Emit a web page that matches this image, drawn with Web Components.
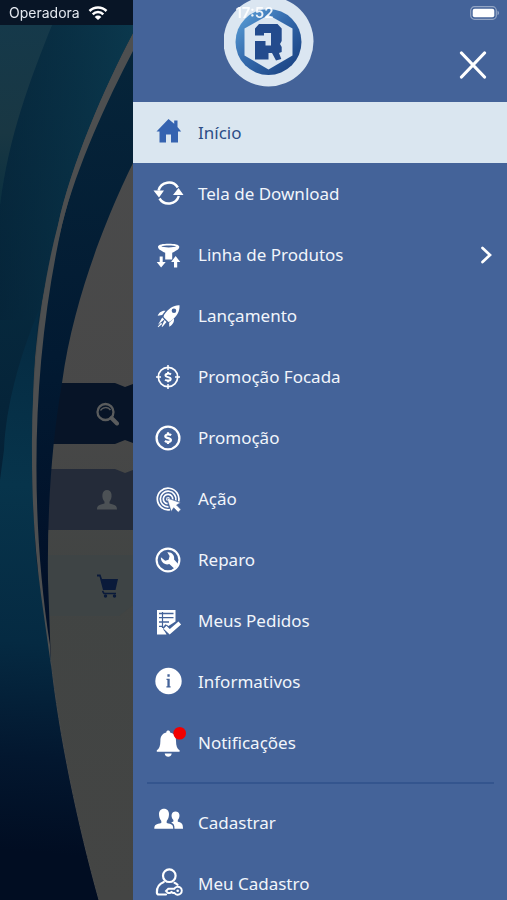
<!DOCTYPE html>
<html lang="pt-BR">
<head>
<meta charset="utf-8">
<meta name="viewport" content="width=device-width, initial-scale=1">
<title>Menu</title>
<style>
  html, body { margin: 0; height: 100%; }
  body { font-family: "Noto Sans", "Open Sans", sans-serif; background: #454746; overflow: hidden; }
</style>
</head>
<body>
<app-shell>
  <status-bar slot="status" carrier="Operadora" time="17:52"></status-bar>
  <home-screen slot="home"></home-screen>
  <side-drawer slot="drawer">
    <drawer-header slot="header"></drawer-header>
    <menu-item icon="home" active>Início</menu-item>
    <menu-item icon="sync">Tela de Download</menu-item>
    <menu-item icon="funnel" expandable>Linha de Produtos</menu-item>
    <menu-item icon="rocket">Lançamento</menu-item>
    <menu-item icon="target">Promoção Focada</menu-item>
    <menu-item icon="coin">Promoção</menu-item>
    <menu-item icon="click">Ação</menu-item>
    <menu-item icon="wrench">Reparo</menu-item>
    <menu-item icon="orders">Meus Pedidos</menu-item>
    <menu-item icon="info">Informativos</menu-item>
    <menu-item icon="bell">Notificações</menu-item>
    <menu-divider></menu-divider>
    <menu-item icon="people">Cadastrar</menu-item>
    <menu-item icon="account">Meu Cadastro</menu-item>
  </side-drawer>
</app-shell>

<script>
const ICONS = {
  home: `<path fill="currentColor" d="M15.500 2 3.500 14.500h3V25.500h6.500v-8h5v8h7V14.500h3.200L24.500 10V3.500h-3.300v3.200z"/>`,
  sync: `<g fill="none" stroke="currentColor" stroke-width="2.500"><path d="M5.500 12.500A10.700 10.700 0 0 1 24.800 9.500"/><path d="M25.800 18A10.700 10.700 0 0 1 6.500 20.500"/></g>
    <path fill="currentColor" d="M.5 12.500h10.500l-5 7zM20 17h10.500L25.500 10z"/>`,
  funnel: `<path fill="currentColor" fill-rule="evenodd" d="M5 7.800C5 5.500 10 4.700 15.700 4.700s10.600.8 10.600 3.100c0 2-2 3.700-7.100 6v6.700h-7v-6.700C7 11.500 5 9.800 5 7.800zm3.300-.2c1.500 1.100 13.300 1.100 14.800 0-2-1.400-12.800-1.400-14.800 0z"/>
    <path fill="currentColor" d="M6.700 17.500h3v5.500h3L8.100 28.500l-4.400-5.500h3zM21 28.500h3.200V23h3.100l-4.700-6-4.500 6H21z"/>`,
  rocket: `<path fill="currentColor" fill-rule="evenodd" d="M26.500 5.200c.4 5.800-2.300 11.300-9.500 16.300l-1.500.4-5-5 .5-1.800C15.500 8.300 20.500 4.900 26.500 5.200zM20.900 8.500a2.300 2.300 0 1 0 .1 4.600 2.300 2.300 0 0 0-.1-4.600z"/>
    <path fill="currentColor" d="M12.500 10.700 9.200 15l-4.500.8c1-3 3.500-5.400 7.800-5.100zM21 18.500c.5 3.700-1.500 6.500-4.700 8.200l-.2-4zM9.200 17.500l2 2-6.200 5.300zM11.500 20l2 2-3.900 4.700-1-.2zM8 22.700l1.200 1.200-4 3.300-.5-.5z"/>`,
  target: `<circle cx="15" cy="16" r="9.700" fill="none" stroke="currentColor" stroke-width="1.700"/><path stroke="currentColor" stroke-width="1.500" d="M15 4v5M15 23v5M3 16h5M22 16h5"/>
    <path fill="none" stroke="currentColor" stroke-width="2" d="M18 13.300c-1.600-1-5.500-1.100-5.500 1 0 2.400 5.200 1.200 5.200 3.600 0 2.200-4 2-5.600.8M15 10.800v2M15 19.300v2"/>`,
  coin: `<circle cx="15" cy="16" r="11.400" fill="none" stroke="currentColor" stroke-width="2.300"/>
    <path fill="none" stroke="currentColor" stroke-width="2.200" d="M18.200 13.200c-1.700-1.100-5.900-1.200-5.900 1.100 0 2.400 5.600 1.200 5.600 3.700 0 2.400-4.300 2.200-6 .9M15 10.300v2.200M15 19.700v2.200"/>`,
  click: `<g fill="none" stroke="currentColor" stroke-width="1.700"><path d="M25.600 18.500A10.800 10.800 0 1 0 17 26.600"/><path d="M22.800 17.500A7.800 7.800 0 1 0 15.500 23.800"/><path d="M19.700 16.500A4.700 4.700 0 1 0 14.600 20.700"/></g>
    <circle cx="15" cy="16" r="2" fill="currentColor"/><path fill="currentColor" stroke="#446399" stroke-width=".5" d="M14 15l13.500 4.700-4 2.300 4.400 4.600-2.700 2.600-4.500-4.500-2.500 3.800z"/>`,
  wrench: `<circle cx="15" cy="16" r="11.400" fill="none" stroke="currentColor" stroke-width="2.100"/>
    <path fill="currentColor" d="M14.300 8.300c4.300-.6 7.700 3 6.800 7.200l4.300 4.700-4.200 4.200-4.900-4.300c-4.400 1.300-8.800-1.900-8.400-6.800l4.300 3.400 3.400-1 1-3.700z"/>`,
  orders: `<path fill="currentColor" d="M4 5h18.500v11.500L15.500 21l-3-1.800-2.800 3.300 3.800 7H4z"/><path stroke="#446399" stroke-width="1.300" d="M6 8.500h14.500M6 12.700h14.500M6 17h10M6 21.300h4"/><path stroke="#446399" stroke-width="1.200" d="M9.500 7v16"/>
    <path fill="none" stroke="#446399" stroke-width="6" d="m12.300 22.700 4.400 4.200L27 18"/><path fill="none" stroke="currentColor" stroke-width="4" d="m12 22.300 4.700 4.400L26.800 18"/>`,
  info: `<circle cx="15.500" cy="15" r="13.200" fill="currentColor"/><path fill="#446399" d="M14.400 8.300h2.300v2.400h-2.300zM13.500 12.800h3.200v7.400h.9v1.200h-4.200v-1.200h1V14h-.9z"/>`,
  bell: `<path fill="currentColor" d="M13.300 5.500c0-2.600 3.800-2.600 3.800 0 4.100.9 5.900 4.200 5.900 8.200 0 5.200 1.200 8.200 3.600 9.500v1.500H3.800v-1.500c2.400-1.300 3.600-4.300 3.600-9.500 0-4 1.800-7.300 5.900-8.200zM11.700 26.500h7c-.5 4.300-6.500 4.300-7 0z"/><circle cx="26.700" cy="6.200" r="6.300" fill="#f20000"/>`,
  people: `<path fill="currentColor" d="M1.300 21.700c0-4.200 2-4.500 7-5.700v-2C6.800 12.300 6 10 6 7c0-7 10-7 10 0 0 3-.8 5.300-2.300 7v2c5 1.200 6.500 1.500 6.500 5.700z"/>
    <path fill="currentColor" d="M21.500 21.700c0-3.600-.8-5.200-3.300-6.200l2.200-.9v-1.500c-3.200-3.600-2-8.600 2.100-8.600 4.300 0 5.300 4.900 2.300 8.600v1.700c4 .9 5.200 1.900 5.200 6.900z"/>`,
  account: `<g fill="none" stroke="currentColor" stroke-width="2.200" stroke-linecap="round"><circle cx="16.300" cy="7.700" r="6.300"/><path d="M10.800 14C6.200 15.800 3.700 20 3.900 24.500c0 1 .8 2 2 2H13M21.500 14.800c1.200.5 2.200 1.200 3 2"/>
    <path d="M21.300 20.800h-6l-2.300 2.200 2 2h2l1.500-1 1.500 1h1.500a4 4 0 1 0-.2-4.200z" stroke-width="1.900"/></g><circle cx="24.700" cy="22.800" r="1.300" fill="currentColor"/>`
};

class BaseElement extends HTMLElement {
  connectedCallback() {
    if (this.shadowRoot) return;
    const tpl = document.createElement("template");
    tpl.innerHTML = this.render();
    this.attachShadow({ mode: "open" }).append(tpl.content.cloneNode(true));
  }
}

customElements.define("app-shell", class extends BaseElement {
  render() {
    return `<style>
      :host { display: grid; grid-template-columns: 133px minmax(0, 1fr); grid-template-rows: 100vh; position: relative; overflow: hidden; }
      .status { position: absolute; inset: 0 0 auto 0; z-index: 2; pointer-events: none; }
    </style>
    <slot name="home"></slot><slot name="drawer"></slot>
    <div class="status"><slot name="status"></slot></div>`;
  }
});

customElements.define("status-bar", class extends BaseElement {
  render() {
    return `<style>
      :host { display: grid; grid-template-columns: 1fr auto 1fr; align-items: center; height: 26px; padding: 0 7px 0 9px;
        color: #fff; font: 14px/26px Inter, "Liberation Sans", sans-serif; }
      .left { display: flex; align-items: center; gap: 8px; color: #e3e8ef; }
      .time { font-size: 15px; font-weight: 600; opacity: .9; }
      .battery { justify-self: end; }
      svg { display: block; }
    </style>
    <div class="left"><span>${this.getAttribute("carrier")}</span>
      <svg width="20" height="16" viewBox="0 0 20 16" fill="none" stroke="#fff" stroke-width="2.500" aria-hidden="true"><path d="M1.500 6a12 12 0 0 1 17 0M4.700 9.300a7.500 7.500 0 0 1 10.600 0"/><path d="M10 15 6.700 11.900a4.700 4.700 0 0 1 6.600 0z" fill="#fff" stroke="none"/></svg>
    </div>
    <span class="time">${this.getAttribute("time")}</span>
    <svg class="battery" width="30" height="14" viewBox="0 0 30 14" aria-hidden="true"><rect x=".7" y=".7" width="25.600" height="12.600" rx="3.800" fill="none" stroke="#93a5c4" stroke-width="1.200"/><rect x="2.700" y="2.700" width="21.600" height="8.600" rx="2" fill="#fff"/><path d="M27.500 4.800c2 .7 2 3.700 0 4.400z" fill="#93a5c4"/></svg>`;
  }
});

customElements.define("home-screen", class extends BaseElement {
  render() {
    return `<style>
      :host { display: block; position: relative; overflow: hidden; background: linear-gradient(#4b4c4d, #484848 45%, #414443 65%, #444544); }
      .art { position: absolute; inset: 0; width: 100%; height: 100%; pointer-events: none; }
      nav { display: flex; flex-direction: column; gap: 25px; padding: 383px 0 0 45px; }
      button { display: flex; align-items: center; justify-content: flex-end; height: 61px; padding: 0 14px 0 0; border: 0; color: #5a5c5d; }
      .search { background: #071427; }
      .user { background: #242b39; color: #4c5155; }
      .cart { background: #3e4445; color: #0a1a3a; }
      .search { clip-path: polygon(0 0, 70px 0, 80px 4px, 88px 1px, 88px 60px, 80px 57px, 70px 61px, 0 61px); }
      .user { clip-path: polygon(0 0, 70px 0, 80px 4px, 88px 1px, 88px 61px, 0 61px); }
      .cart { clip-path: polygon(0 0, 100% 0, 100% 50px, 74px 61px, 0 61px); }
    </style>
    <nav aria-label="Atalhos">
      <button class="search" aria-label="Pesquisar"><svg width="24" height="24" viewBox="0 0 24 24" fill="none" stroke="currentColor"><circle cx="10.500" cy="10" r="8" stroke-width="2.300"/><path d="M5.500 8.500c2-3.500 7.500-4 10-.5" stroke-width="1.500"/><path d="m16.500 16 5.500 5.500" stroke-width="4" stroke-linecap="round"/></svg></button>
      <button class="user" aria-label="Perfil"><svg width="24" height="24" viewBox="0 0 24 24" fill="currentColor"><path d="M2 21.500c0-4 2-4.500 7.500-6v-1.700C6 9.500 6.800 2 12 2s6 7.500 2.500 11.800v1.700c5.500 1.500 7.500 2 7.500 6z"/></svg></button>
      <button class="cart" aria-label="Carrinho"><svg width="24" height="24" viewBox="0 0 24 24" fill="currentColor"><path d="M2 .5h3.500L7 5h16l-2.500 11H8L4.500 2.500H2z"/><path d="M7.500 17 9 19.500h12" fill="none" stroke="currentColor" stroke-width="1.500"/><circle cx="10.500" cy="22" r="1.700"/><circle cx="19.500" cy="22" r="1.700"/></svg></button>
    </nav>
    <svg class="art" viewBox="0 0 133 900" preserveAspectRatio="none" aria-hidden="true">
      <defs>
        <linearGradient id="body" x1="0" y1="0" x2="0" y2="1"><stop offset="0" stop-color="#0b3448"/><stop offset=".25" stop-color="#072c40"/><stop offset=".45" stop-color="#052439"/><stop offset="1" stop-color="#020d23"/></linearGradient>
        <linearGradient id="shine" x1="0" y1="0" x2="1" y2="0"><stop offset="0" stop-color="#052338" stop-opacity=".6"/><stop offset="1" stop-color="#0b394e" stop-opacity=".8"/></linearGradient>
        <linearGradient id="band" x1="0" y1="0" x2="0" y2="1"><stop offset="0" stop-color="#06253a"/><stop offset=".5" stop-color="#021a32"/><stop offset="1" stop-color="#010d25"/></linearGradient>
        <linearGradient id="low" gradientUnits="userSpaceOnUse" x1="45" y1="330" x2="5" y2="850"><stop offset="0" stop-color="#052b42"/><stop offset=".3" stop-color="#07344b"/><stop offset=".6" stop-color="#052a42"/><stop offset=".82" stop-color="#03172f"/><stop offset="1" stop-color="#010d22"/></linearGradient>
        <linearGradient id="corner" x1="0" y1="0" x2="0" y2="1"><stop offset="0" stop-color="#15394a"/><stop offset=".6" stop-color="#193743"/><stop offset="1" stop-color="#0b3040"/></linearGradient>
      </defs>
      <path fill="url(#band)" d="M133 45V163C112 206 74 293 62 383C52 440 47 510 48 580L51 665C25 560 25 410 50 280C68 185 105 80 133 45z"/>
      <path fill="url(#body)" d="M0 0H133V33C104 88 71 165 58 225C30 330 24 460 37 565L51 660C59 735 78 825 99 900H0z"/>
      <path fill="url(#shine)" d="M60 25H133V33C104 88 71 165 58 225L38 320H0V205C10 130 30 70 52 25z"/>
      <path fill="url(#corner)" d="M0 25H52C30 80 9 135 0 205z"/>
      <path fill="url(#low)" d="M39 310C20 355 6 405 4 450L0 480V900H99C78 825 59 735 51 660L37 565C30 490 31 380 39 310z"/>
      <path fill="#4d4f50" d="M133 34C104 88 71 165 58 225C30 330 25 480 41 595L51 666L50 645C29 510 32 360 62 225C77 165 107 101 133 51z"/>
      <path fill="none" stroke="#494a4a" d="M51 660C59 735 78 825 99 900"/>
      <path fill="#081526" d="M0 0h133v25H0z"/>
    </svg>`;
  }
});

customElements.define("side-drawer", class extends BaseElement {
  render() {
    return `<style>
      :host { display: block; overflow-y: auto; scrollbar-width: none; background: #446399; color: #f1f5fb; }
      nav { display: flex; flex-direction: column; }
    </style>
    <slot name="header"></slot><nav aria-label="Menu principal"><slot></slot></nav>`;
  }
});

customElements.define("drawer-header", class extends BaseElement {
  render() {
    return `<style>
      :host { display: flex; justify-content: space-between; align-items: flex-start; height: 102px; padding: 0 20px 0 91px; }
      button { padding: 0; border: 0; background: none; color: #fff; margin-top: 51px; }
      svg { display: block; }
    </style>
    <svg width="90" height="87" viewBox="0 0 90 87" role="img" aria-label="Logo">
      <defs><linearGradient id="disc" x1="0" y1="0" x2="1" y2="1"><stop offset="0" stop-color="#5fa5dc"/><stop offset=".45" stop-color="#356bad"/><stop offset="1" stop-color="#153b7b"/></linearGradient></defs>
      <circle cx="44.500" cy="41.500" r="45" fill="#dbe6f1"/><circle cx="44.500" cy="42" r="33" fill="url(#disc)"/>
      <path fill="#dbe6f1" d="m44.500 15 24 13.500v27L44.500 69.500l-24-14v-27z"/>
      <path fill="#234b8d" d="M31 28.500 35 24H53.500l4.200 4.500V41L56 44l1.700 3v5L55 53l2.300 6-5.300 1.500L48 53h-3.500v6.500H31V41H41.500v4.500H47V33H40v2.500h-9z"/>
    </svg>
    <button aria-label="Fechar menu"><svg width="28" height="28" viewBox="0 0 28 28" stroke="currentColor" stroke-width="3.200" stroke-linecap="round"><path d="m2.500 2 23 24M25.500 2l-23 24"/></svg></button>`;
  }
});

customElements.define("menu-item", class extends BaseElement {
  render() {
    const active = this.hasAttribute("active");
    return `<style>
      :host { display: block; }
      a { display: flex; align-items: center; gap: 14px; height: 61px; box-sizing: border-box; padding: 0 14px 0 20px;
        color: inherit; text-decoration: none; font-size: 17px; line-height: 24px; }
      .icon { flex: none; color: #fff; overflow: visible; }
      .label { flex: 1; }
      :host([active]) a { background: #dae6f0; color: #2d4e87; }
      :host([active]) .icon { color: #3563b0; }
    </style>
    <a href="#" ${active ? 'aria-current="page"' : ""}>
      <svg class="icon" width="31" height="31" viewBox="0 0 31 31" aria-hidden="true">${ICONS[this.getAttribute("icon")]}</svg>
      <span class="label"><slot></slot></span>
      ${this.hasAttribute("expandable") ? '<svg width="14" height="18" viewBox="0 0 14 18" fill="none" stroke="#fff" stroke-width="2.700" stroke-linecap="round" aria-hidden="true"><path d="m3.500 2 7.500 7-7.500 7"/></svg>' : ""}
    </a>`;
  }
});

customElements.define("menu-divider", class extends BaseElement {
  render() {
    return `<style>
      :host { display: block; padding: 9px 13px 8px 14px; }
      hr { margin: 0; border: 0; height: 2px; background: #34558e; }
    </style><hr>`;
  }
});
</script>
</body>
</html>
